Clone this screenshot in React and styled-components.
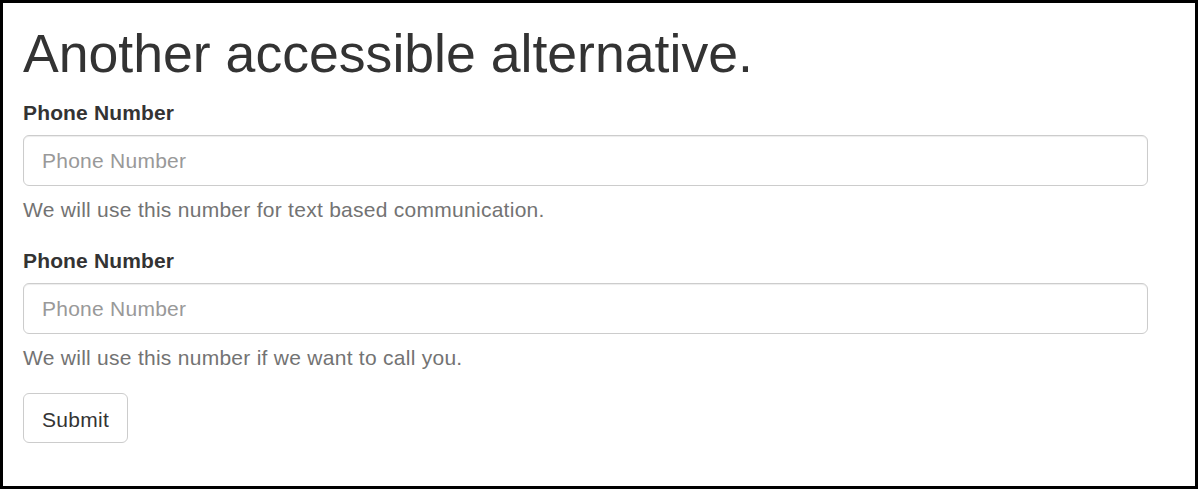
import styled, { createGlobalStyle } from "styled-components";

const GlobalStyle = createGlobalStyle`
    html, body {
        margin: 0;
        padding: 0;
        background: #fff;
    }
    body {
        font-family: "Liberation Sans", Arial, Helvetica, sans-serif;
        color: #333;
    }
    * {
        box-sizing: border-box;
    }
`;

const Frame = styled.div`
    width: 1198px;
    height: 489px;
    border: 3px solid #000;
    padding: 21px 20px 0 20px;
    background: #fff;
`;

const Content = styled.form`
    width: 1125px;
`;

const Title = styled.h1`
    margin: 0 0 15px 0;
    font-size: 53.6px;
    font-weight: 400;
    line-height: 1.1;
    color: #333;
`;

const Group = styled.div`
    margin-bottom: 21px;
`;

const Label = styled.label`
    display: block;
    margin-bottom: 7px;
    font-size: 21px;
    font-weight: 700;
    line-height: 30px;
    letter-spacing: 0.15px;
    color: #333;
`;

const Input = styled.input`
    display: block;
    width: 100%;
    height: 51px;
    padding: 10px 18px 8px 18px;
    font-family: inherit;
    font-size: 21px;
    letter-spacing: 0.25px;
    color: #555;
    background: #fff;
    border: 1px solid #ccc;
    border-radius: 6px;
    box-shadow: inset 0 1px 1px rgba(0, 0, 0, 0.075);
    outline: none;

    &::placeholder {
        color: #999;
    }
`;

const Help = styled.p`
    margin: 9px 0 0 0;
    font-size: 21px;
    line-height: 30px;
    letter-spacing: 0.27px;
    color: #737373;
`;

const Button = styled.button`
    display: block;
    margin-top: -1px;
    height: 50px;
    padding: 4px 18px 0 18px;
    font-family: inherit;
    font-size: 21px;
    letter-spacing: 0.3px;
    color: #333;
    background: #fff;
    border: 1px solid #ccc;
    border-radius: 6px;
    cursor: pointer;
`;

const fields = [
    { id: "phone1", help: "We will use this number for text based communication." },
    { id: "phone2", help: "We will use this number if we want to call you." },
];

const App = () => {
    return (
        <>
            <GlobalStyle />
            <Frame>
                <Content onSubmit={(e) => e.preventDefault()}>
                    <Title>Another accessible alternative.</Title>
                    {fields.map((f) => (
                        <Group key={f.id}>
                            <Label htmlFor={f.id}>Phone Number</Label>
                            <Input id={f.id} type="tel" placeholder="Phone Number" aria-describedby={`${f.id}-help`} />
                            <Help id={`${f.id}-help`}>{f.help}</Help>
                        </Group>
                    ))}
                    <Button type="submit">Submit</Button>
                </Content>
            </Frame>
        </>
    );
};

export default App;
